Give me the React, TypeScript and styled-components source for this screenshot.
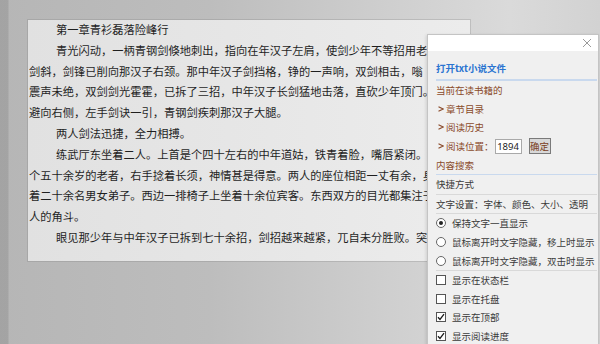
import React from 'react';
import styled, { createGlobalStyle } from 'styled-components';

const GlobalStyle = createGlobalStyle`
  html, body {
    margin: 0;
    padding: 0;
    width: 600px;
    height: 344px;
    overflow: hidden;
  }
  body {
    font-family: "Noto Sans CJK SC", "Noto Sans", sans-serif;
  }
`;

const Desktop = styled.div`
  position: relative;
  width: 600px;
  height: 344px;
  overflow: hidden;
  background:
    linear-gradient(to right, rgba(0, 0, 0, 0.1) 0, rgba(0, 0, 0, 0.1) 8px, transparent 9px),
    linear-gradient(to right, #b6b6b6 0%, #bdbdbd 35%, #cfcfcf 65%, #dadada 85%, #d2d2d2 100%);
  padding: 20px 0 0 28px;
  box-sizing: border-box;
`;

const Reader = styled.div`
  width: 442px;
  height: 241px;
  background: linear-gradient(to right, #e1e1e1, #ececec);
  box-shadow: 0 0 0 1px rgba(120, 120, 120, 0.25);
  overflow: hidden;
`;

const ReaderText = styled.div`
  margin-top: -1px;
  padding-left: 1px;
  font-size: 11.25px;
  line-height: 20.8px;
  color: #1f1f1f;
`;

const Line = styled.div<{ $indent?: boolean }>`
  white-space: nowrap;
  overflow: hidden;
  padding-left: ${(p) => (p.$indent ? '27px' : '0')};
`;

const Menu = styled.div`
  position: absolute;
  left: 427px;
  top: 34px;
  width: 172px;
  height: 320px;
  background: #f0f0f0;
  border: 1px solid #c4c4c4;
  box-sizing: border-box;
  box-shadow: -1px 1px 3px rgba(0, 0, 0, 0.12);
  font-size: 9.5px;
  color: #3a3a3a;
`;

const MenuHeader = styled.div`
  height: 16px;
  background: #ffffff;
  display: flex;
  justify-content: flex-end;
  align-items: center;
  padding-right: 6px;
`;

const MenuBody = styled.div`
  padding: 0 1px 0 8px;
`;

const OpenRow = styled.div`
  padding-top: 8px;
  height: 18px;
  line-height: 18px;
  color: #2a74d0;
  font-weight: 700;
  margin-bottom: 2px;
`;

const Separator = styled.div<{ $blue?: boolean; $thick?: boolean }>`
  height: ${(p) => (p.$thick ? '2px' : '1px')};
  background: ${(p) => (p.$blue ? '#c9d9ee' : '#d9d9d9')};
`;

const Row = styled.div<{ $tone?: 'brown' | 'dark' }>`
  height: 18.6px;
  display: flex;
  align-items: center;
  white-space: nowrap;
  color: ${(p) => (p.$tone === 'brown' ? '#8a4a2a' : '#3a3a3a')};
`;

const ArrowBox = styled.span`
  width: 10px;
  display: flex;
  align-items: center;
  padding-left: 2px;
  box-sizing: border-box;
`;

const NumberInput = styled.div`
  width: 27px;
  height: 15px;
  box-sizing: border-box;
  background: #fff;
  border: 1px solid #a9a9a9;
  font-family: "Noto Sans", sans-serif;
  font-size: 9.5px;
  line-height: 13px;
  color: #222;
  text-align: center;
  margin: 0 7px 0 1px;
`;

const ConfirmButton = styled.div`
  width: 22px;
  height: 16px;
  box-sizing: border-box;
  background: #d8d8d8;
  border: 1px solid #7a7a7a;
  color: #7a3e22;
  font-size: 9.5px;
  line-height: 14px;
  text-align: center;
`;

const Radio = styled.span<{ $on?: boolean }>`
  width: 10px;
  height: 10px;
  box-sizing: border-box;
  border-radius: 50%;
  border: 1px solid #666;
  background: #fff;
  margin: 0 6px 0 0;
  display: flex;
  align-items: center;
  justify-content: center;
  &::after {
    content: '';
    width: 4px;
    height: 4px;
    border-radius: 50%;
    background: ${(p) => (p.$on ? '#222' : 'transparent')};
  }
`;

const Box = styled.span`
  width: 10px;
  height: 10px;
  box-sizing: border-box;
  border: 1px solid #555;
  background: #fff;
  margin: 0 6px 0 0;
  display: flex;
  align-items: center;
  justify-content: center;
`;

// visible part of each line, up to where the menu covers the page
const paragraphs: { text: string; indent?: boolean }[] = [
  { text: '第一章青衫磊落险峰行', indent: true },
  { text: '青光闪动，一柄青钢剑倏地刺出，指向在年汉子左肩，使剑少年不等招用老', indent: true },
  { text: '剑斜，剑锋已削向那汉子右颈。那中年汉子剑挡格，铮的一声响，双剑相击，嗡' },
  { text: '震声未绝，双剑剑光霍霍，已拆了三招，中年汉子长剑猛地击落，直砍少年顶门。' },
  { text: '避向右侧，左手剑诀一引，青钢剑疾刺那汉子大腿。' },
  { text: '两人剑法迅捷，全力相搏。', indent: true },
  { text: '练武厅东坐着二人。上首是个四十左右的中年道姑，铁青着脸，嘴唇紧闭。', indent: true },
  { text: '个五十余岁的老者，右手捻着长须，神情甚是得意。两人的座位相距一丈有余，身' },
  { text: '着二十余名男女弟子。西边一排椅子上坐着十余位宾客。东西双方的目光都集注于' },
  { text: '人的角斗。' },
  { text: '眼见那少年与中年汉子已拆到七十余招，剑招越来越紧，兀自未分胜败。突', indent: true },
];

const CloseIcon = () => (
  <svg width="10" height="10" viewBox="0 0 10 10">
    <path d="M1 1L9 9M9 1L1 9" stroke="#9a9a9a" strokeWidth="1" fill="none" />
  </svg>
);

const Chevron = () => (
  <svg width="6" height="6" viewBox="0 0 6 6">
    <path d="M0.5 0.8L5.2 3L0.5 5.2" stroke="#8a4a2a" strokeWidth="1.1" fill="none" />
  </svg>
);

const Check = () => (
  <svg width="8" height="8" viewBox="0 0 8 8">
    <path d="M1 4.2L3 6.4L7 1.2" stroke="#1a1a1a" strokeWidth="1.3" fill="none" />
  </svg>
);

const App = () => {
  return (
    <>
      <GlobalStyle />
      <Desktop>
        <Reader>
          <ReaderText>
            {paragraphs.map((p, i) => (
              <Line key={i} $indent={p.indent}>
                {p.text}
              </Line>
            ))}
          </ReaderText>
        </Reader>

        <Menu>
          <MenuHeader>
            <CloseIcon />
          </MenuHeader>
          <MenuBody>
            <OpenRow>打开txt小说文件</OpenRow>
            <Separator $blue $thick />
            <Row $tone="brown">当前在读书籍的</Row>
            <Row $tone="brown">
              <ArrowBox>
                <Chevron />
              </ArrowBox>
              章节目录
            </Row>
            <Row $tone="brown">
              <ArrowBox>
                <Chevron />
              </ArrowBox>
              阅读历史
            </Row>
            <Row $tone="brown">
              <ArrowBox>
                <Chevron />
              </ArrowBox>
              阅读位置：
              <NumberInput>1894</NumberInput>
              <ConfirmButton>确定</ConfirmButton>
            </Row>
            <Row $tone="brown">内容搜索</Row>
            <Separator $blue />
            <Row>快捷方式</Row>
            <Separator />
            <Row>文字设置：字体、颜色、大小、透明</Row>
            <Separator />
            <Row>
              <Radio $on />
              保持文字一直显示
            </Row>
            <Row>
              <Radio />
              鼠标离开时文字隐藏，移上时显示
            </Row>
            <Row>
              <Radio />
              鼠标离开时文字隐藏，双击时显示
            </Row>
            <Separator />
            <Row>
              <Box />
              显示在状态栏
            </Row>
            <Row>
              <Box />
              显示在托盘
            </Row>
            <Row>
              <Box>
                <Check />
              </Box>
              显示在顶部
            </Row>
            <Row>
              <Box>
                <Check />
              </Box>
              显示阅读进度
            </Row>
            <Separator />
          </MenuBody>
        </Menu>
      </Desktop>
    </>
  );
};

export default App;
